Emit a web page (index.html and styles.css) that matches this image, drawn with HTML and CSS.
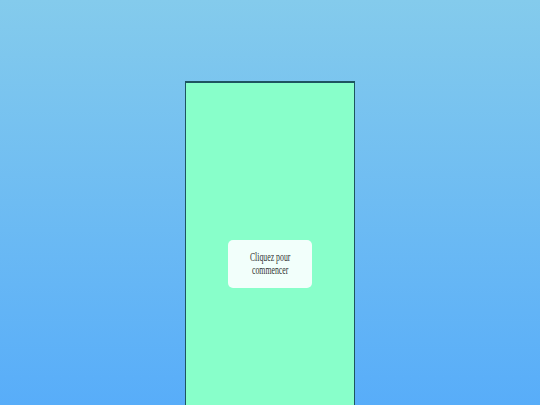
FILE: index.html
```html
<!DOCTYPE html>
<html lang="fr">
<head>
<meta charset="utf-8">
<title>Commencer</title>
<link rel="stylesheet" href="styles.css">
</head>
<body>
<main class="stage">
  <section class="panel">
    <button class="start-card" type="button">
      <span class="start-label">Cliquez pour<br>commencer</span>
    </button>
  </section>
</main>
</body>
</html>
```

FILE: styles.css
```css
html, body {
  margin: 0;
  padding: 0;
  height: 100%;
}
body {
  background: linear-gradient(to bottom, #84cbec 0%, #58adf9 100%);
  overflow: hidden;
  font-family: "Liberation Serif", "Times New Roman", serif;
}
.stage {
  display: flex;
  justify-content: center;
  padding-top: 81px;
}
.panel {
  box-sizing: border-box;
  width: 170px;
  height: 364px;
  flex: 0 0 auto;
  background: #88ffca;
  border: 1px solid #1d5560;
  border-top-width: 2px;
  display: flex;
  align-items: center;
  justify-content: center;
}
.start-card {
  width: 84px;
  height: 48px;
  border: none;
  border-radius: 5px;
  background: #f2fffb;
  padding: 0;
  display: flex;
  align-items: center;
  justify-content: center;
  font: inherit;
  color: #333;
  cursor: pointer;
}
.start-label {
  display: inline-block;
  font-family: "Liberation Serif", "Times New Roman", serif;
  font-size: 12px;
  line-height: 13px;
  text-align: center;
  white-space: nowrap;
  transform: scaleX(0.65);
}
```
